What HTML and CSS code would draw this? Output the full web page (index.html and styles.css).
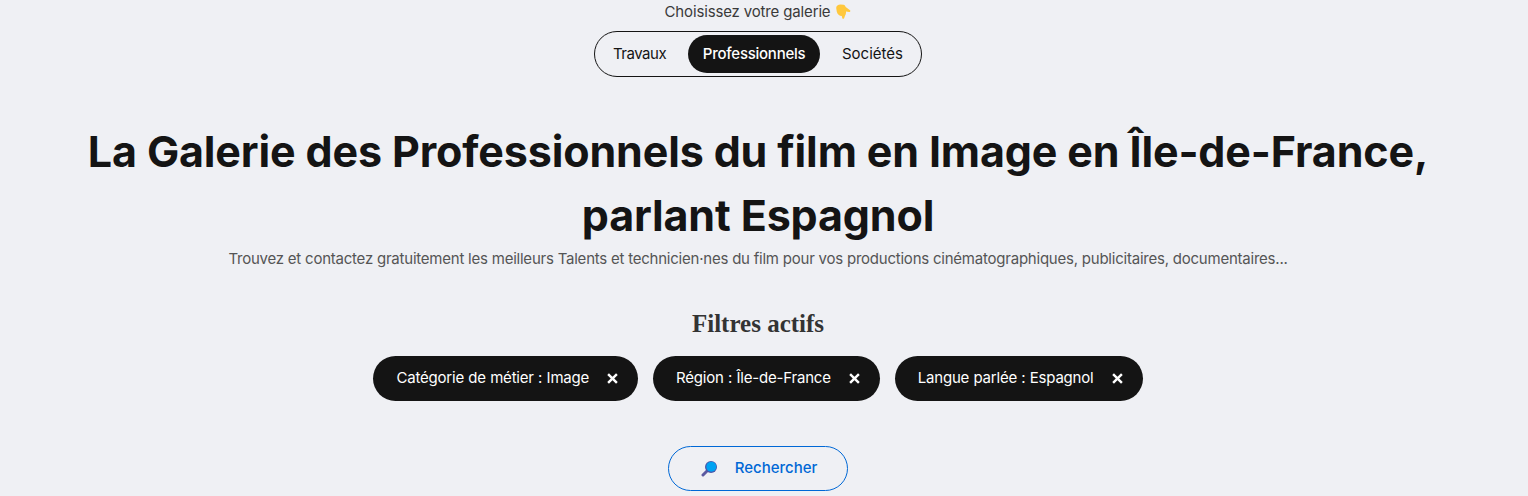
FILE: index.html
```html
<!DOCTYPE html>
<html lang="fr">
<head>
<meta charset="utf-8">
<title>Galerie</title>
<link rel="stylesheet" href="styles.css">
</head>
<body>
<main class="page">
  <p class="choose">Choisissez votre galerie <svg class="hand" viewBox="0 0 16 16" width="16" height="16"><path fill="#ffc83d" d="M1.200 4C1.200 1.800 3 .5 5.500.5L8.500.7c1.200.3 1.800 1.200 2.200 2.300l4.300 3.300c.8.800.2 1.800-.8 1.600L11 7.500c.2 1.500-.2 3-1 4.200l-.9 2.600c-.4.800-1.500.7-1.800-.1L6.800 12c-2.500 0-4.400-1.600-5-4.200z"/></svg></p>
  <nav class="tabs">
    <a class="tab tab-tight">Travaux</a>
    <a class="tab tab-active">Professionnels</a>
    <a class="tab tab-wide">Sociétés</a>
  </nav>
  <h1 class="title">La Galerie des Professionnels du film en Image en Île-de-France,<br>parlant Espagnol</h1>
  <p class="lead">Trouvez et contactez gratuitement les meilleurs Talents et technicien·nes du film pour vos productions cinématographiques, publicitaires, documentaires...</p>
  <h2 class="filters-title">Filtres actifs</h2>
  <ul class="chips">
    <li class="chip">Catégorie de métier : Image <svg class="close" viewBox="0 0 10 10" width="11" height="11"><path d="M1 1l8 8M9 1l-8 8"/></svg></li>
    <li class="chip">Région : Île-de-France <svg class="close" viewBox="0 0 10 10" width="11" height="11"><path d="M1 1l8 8M9 1l-8 8"/></svg></li>
    <li class="chip">Langue parlée : Espagnol <svg class="close" viewBox="0 0 10 10" width="11" height="11"><path d="M1 1l8 8M9 1l-8 8"/></svg></li>
  </ul>
  <button class="search"><svg class="loupe" viewBox="0 0 16 16" width="16" height="16"><path d="M2 14l4-4" stroke="#5c5aa0" stroke-width="3" stroke-linecap="round"/><circle cx="10" cy="6" r="6" fill="#4a55a8"/><circle cx="10.300" cy="5.700" r="5" fill="#00a2f2"/></svg><span class="search-label">Rechercher</span></button>
</main>
</body>
</html>
```
FILE: styles.css
```css
* { box-sizing: border-box; }
html, body { margin: 0; padding: 0; }
body {
  background: #eff0f4;
  color: #141414;
  font-family: Inter, "Liberation Sans", sans-serif;
  height: 496px;
  overflow: hidden;
}
.page {
  display: flex;
  flex-direction: column;
  align-items: center;
  padding-right: 12px;
}
.choose {
  margin: 0;
  height: 24px;
  line-height: 24px;
  font-size: 15px;
  letter-spacing: -0.15px;
  color: #3a3a3a;
  display: flex;
  align-items: center;
  gap: 5px;
}
.tabs {
  margin-top: 7px;
  width: 328px;
  height: 46px;
  border: 1px solid #141414;
  border-radius: 23px;
  display: flex;
  align-items: center;
  padding: 0 3px;
  justify-content: space-between;
}
.tab {
  height: 38px;
  padding: 0 15px 2px;
  border-radius: 19px;
  display: flex;
  align-items: center;
  font-size: 15px;
  font-weight: 400;
  letter-spacing: -0.2px;
}
.tab-tight { letter-spacing: -0.48px; }
.tab-wide { letter-spacing: 0; }
.tab-active {
  background: #141414;
  color: #fff;
  font-weight: 500;
  letter-spacing: -0.25px;
}
.title {
  margin: 42px 0 1px;
  font-size: 43px;
  line-height: 64px;
  font-weight: 700;
  letter-spacing: -0.14px;
  text-align: center;
  white-space: nowrap;
}
.lead {
  margin: 0;
  height: 22px;
  line-height: 22px;
  font-size: 15px;
  letter-spacing: -0.225px;
  color: #555;
  white-space: nowrap;
}
.filters-title {
  margin: 39px 0 0;
  height: 30px;
  line-height: 30px;
  font-family: "Liberation Serif", serif;
  font-size: 25px;
  font-weight: 700;
  color: #333;
}
.chips {
  list-style: none;
  margin: 17px 0 0;
  padding: 0;
  display: flex;
  gap: 15px;
}
.chip {
  height: 45px;
  padding: 0 20px 2px 23px;
  border-radius: 23px;
  background: #141414;
  color: #fff;
  display: flex;
  align-items: center;
  font-size: 15px;
  font-weight: 400;
  letter-spacing: -0.2px;
  word-spacing: 0.3px;
  gap: 18px;
}
.close { fill: none; stroke: #fff; stroke-width: 2.200; margin-top: 2px; }
.search {
  margin-top: 45px;
  width: 180px;
  height: 45px;
  border: 1px solid #0068d6;
  border-radius: 23px;
  background: transparent;
  color: #0068d6;
  font-family: inherit;
  font-size: 15px;
  font-weight: 500;
  display: flex;
  align-items: center;
  justify-content: center;
  gap: 18px;
  padding: 0 0 0 2px;
}
.search-label { margin-bottom: 2px; }
```
